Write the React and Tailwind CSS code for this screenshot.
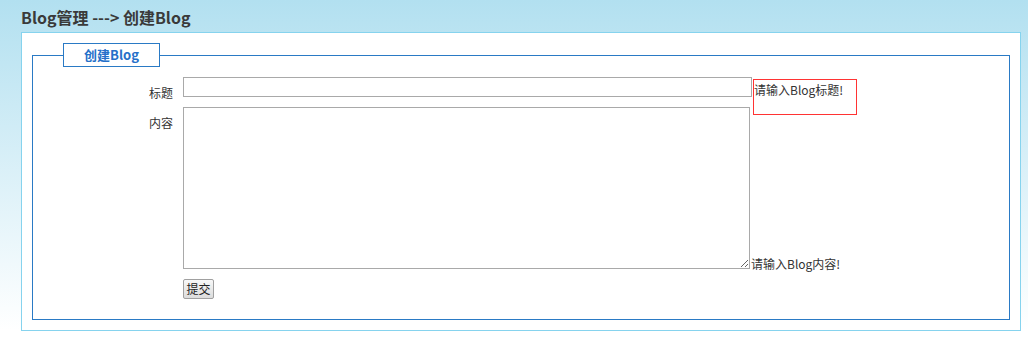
import React from 'react'

const App = () => {
  return (
    <div className="min-h-[359px] bg-linear-to-b from-[#b2e0f0] to-white to-[92%] px-[21px] font-['Noto_Sans_CJK_SC',sans-serif] text-[#333]">
      {/* Breadcrumb */}
      <h1 className="h-[32px] text-[16px] font-bold leading-[34px] text-[#3a3a3a]">Blog管理 ---&gt; 创建Blog</h1>

      <div className="w-[1000px] border border-[#86d3ee] bg-white p-[10px]">
        <fieldset className="border border-[#2a7ac5] pl-[30px] pt-[10px] pb-[20px]">
          <legend className="box-border h-[24px] w-[97px] border border-[#2a7ac5]">
            <div className="text-center text-[13px] font-bold leading-[22px] text-[#2670c9]">创建Blog</div>
          </legend>

          {/* Title row */}
          <div className="flex h-[20px] items-start">
            <label className="w-[110px] pt-[7px] text-right text-[12px] leading-[18px]">标题</label>
            <input
              type="text"
              className="ml-[10px] box-border h-[20px] w-[569px] border border-[#a9a9a9] bg-white px-1 text-[12px] outline-none"
            />
            <div className="ml-px mt-[2px] box-border h-[36px] w-[104px] shrink-0 border border-[#f33] pt-[1px] text-[12px] leading-[18px]">
              请输入Blog标题!
            </div>
          </div>

          {/* Content row */}
          <div className="mt-[10px] flex items-start">
            <label className="w-[110px] pt-[7px] text-right text-[12px] leading-[18px]">内容</label>
            <div className="ml-[10px] flex items-end">
              <textarea className="box-border block h-[162px] w-[567px] border border-[#a9a9a9] bg-white p-1 text-[12px] outline-none" />
              <span className="mb-[-1px] ml-px whitespace-nowrap text-[12px] leading-[12px]">请输入Blog内容!</span>
            </div>
          </div>

          {/* Submit */}
          <div className="mt-[10px] flex">
            <div className="w-[110px]" />
            <button className="ml-[10px] box-border h-[20px] w-[31px] rounded-[2px] border border-[#a0a0a0] bg-linear-to-b from-[#f8f8f8] to-[#dcdcdc] text-[12px] leading-[16px] text-[#222]">
              提交
            </button>
          </div>
        </fieldset>
      </div>
    </div>
  )
}

export default App
